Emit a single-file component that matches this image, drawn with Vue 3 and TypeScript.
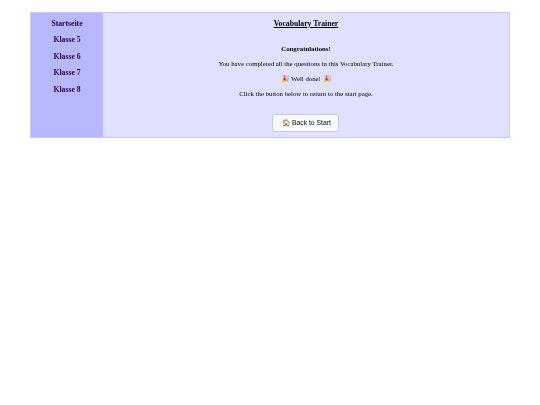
<script setup lang="ts">
const links: string[] = ['Startseite', 'Klasse 5', 'Klasse 6', 'Klasse 7', 'Klasse 8']
</script>

<template>
  <div class="page">
    <div class="frame">
      <nav class="side">
        <a v-for="l in links" :key="l" class="link">{{ l }}</a>
      </nav>
      <main class="content">
        <h1 class="title">Vocabulary Trainer</h1>
        <h2 class="congrats">Congratulations!</h2>
        <p class="line">You have completed all the questions in this Vocabulary Trainer.</p>
        <p class="line">🎉 Well done! 🎉</p>
        <p class="line">Click the button below to return to the start page.</p>
        <button class="btn" type="button">🏠 Back to Start</button>
      </main>
    </div>
  </div>
</template>

<style scoped>
.page { width: 540px; height: 405px; padding: 12px 30px 0; box-sizing: border-box; background: #fff; font-family: "Liberation Serif", "Times New Roman", serif; }
.frame { display: flex; height: 126px; box-sizing: border-box; border: 1px solid #c8c8f0; background: #e0e0ff; filter: blur(0.5px); }
.side { width: 72px; flex: none; background: #b8b8ff; display: flex; flex-direction: column; align-items: center; padding-top: 5px; gap: 5.4px; box-sizing: border-box; }
.link { font-size: 7.7px; line-height: 11px; font-weight: bold; color: #24004a; }
.content { flex: 1; display: flex; flex-direction: column; align-items: center; color: #000; }
.title { margin: 5px 0 0; font-size: 7.7px; line-height: 11px; font-weight: bold; text-decoration: underline; }
.congrats { margin: 15px 0 0; font-size: 6.8px; line-height: 9px; font-weight: bold; }
.line { margin: 6px 0 0; font-size: 6.8px; line-height: 9px; }
.btn { margin: 16px 1px 0 0; width: 67px; height: 18px; padding: 0 0 0 2px; border: 1px solid #c8c8e0; border-radius: 3px; background: #f8f8ff; color: #111; font-family: "Liberation Sans", Arial, sans-serif; font-size: 6.8px; display: flex; align-items: center; justify-content: center; }
</style>

<style>
html, body { margin: 0; background: #fff; }
</style>
